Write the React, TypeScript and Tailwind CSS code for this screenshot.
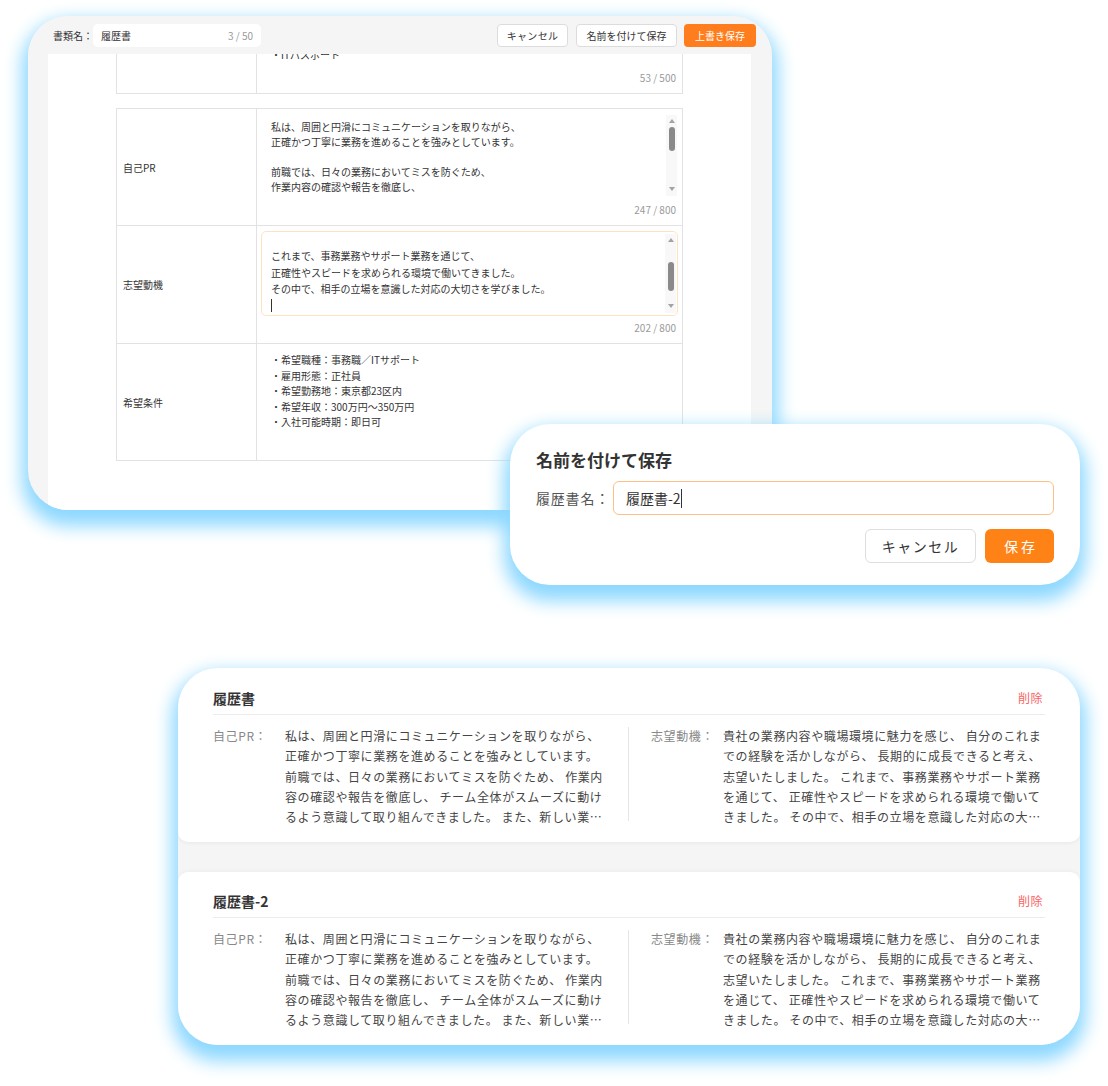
import React from "react";

const prText =
  "私は、周囲と円滑にコミュニケーションを取りながら、正確かつ丁寧に業務を進めることを強みとしています。 前職では、日々の業務においてミスを防ぐため、 作業内容の確認や報告を徹底し、 チーム全体がスムーズに動けるよう意識して取り組んできました。 また、新しい業務にも積極的に取り組み、周囲から信頼を得てきました。";

const motiveText =
  "貴社の業務内容や職場環境に魅力を感じ、 自分のこれまでの経験を活かしながら、 長期的に成長できると考え、志望いたしました。 これまで、事務業務やサポート業務を通じて、 正確性やスピードを求められる環境で働いてきました。 その中で、相手の立場を意識した対応の大切さを学びました。";

const Arrow = ({ down }: { down?: boolean }) => (
  <svg width="6" height="4" viewBox="0 0 6 4" className="shrink-0">
    {down ? <path d="M0 0h6L3 4z" fill="#a3a3a3" /> : <path d="M0 4h6L3 0z" fill="#a3a3a3" />}
  </svg>
);

const Scrollbar = ({ thumb }: { thumb: "pr" | "motive" }) => (
  <div className="absolute right-[1px] top-[2px] bottom-[2px] w-[11px] bg-[#f8f8f8] flex flex-col items-center pt-[4px] pb-[5px]">
    <Arrow />
    {thumb === "pr" ? (
      <div className="mt-[4px] w-[6px] h-[24px] rounded-full bg-[#8a8a8a]" />
    ) : (
      <div className="mt-[20px] w-[6px] h-[29px] rounded-full bg-[#8a8a8a]" />
    )}
    <div className="flex-1" />
    <Arrow down />
  </div>
);

function EditorCard() {
  return (
    <div className="absolute left-[28px] top-[16px] w-[744px] h-[494px] rounded-[40px] bg-[#f5f5f5] overflow-hidden flex flex-col shadow-[0_10px_18px_6px_#8dd8ff]">
      <header className="relative z-10 h-[38px] shrink-0 flex items-center pl-[25px] pr-[16px] bg-[#f5f5f5]">
        <span className="w-[40px] text-[10px] text-[#333]">書類名：</span>
        <div className="w-[168px] h-[23px] bg-white rounded-[5px] flex items-center justify-between pl-[8px] pr-[8px]">
          <span className="text-[10px] text-[#333]">履歴書</span>
          <span className="text-[10px] text-[#9a9a9a]">3 / 50</span>
        </div>
        <div className="ml-auto flex items-center">
          <button className="w-[71px] h-[23px] bg-white border border-[#dcdcdc] rounded-[4px] text-[10px] text-[#333] tracking-[0.3px]">
            キャンセル
          </button>
          <button className="ml-[8px] w-[101px] h-[23px] bg-white border border-[#dcdcdc] rounded-[4px] text-[10px] text-[#333]">
            名前を付けて保存
          </button>
          <button className="ml-[7px] w-[72px] h-[23px] bg-[#ff7d1c] rounded-[4px] text-[10px] text-white">
            上書き保存
          </button>
        </div>
      </header>

      <div className="flex-1 ml-[20px] mr-[21px] bg-white overflow-hidden pl-[68px]">
        <div className="w-[567px] -mt-[78px] text-[10px] text-[#333]">
          {/* previous section, scrolled mostly out of view */}
          <div className="border border-[#e2e2e2] grid grid-cols-[140px_1fr] h-[118px]">
            <div className="border-r border-[#e2e2e2]" />
            <div className="px-[4px] pt-[4px]">
              <div className="h-[85px] flex flex-col justify-end pl-[10px] pb-[4px] leading-[15px]">
                <p>・ITパスポート</p>
              </div>
              <p className="mt-[5px] h-[14px] leading-[14px] text-right pr-[2px] text-[#9a9a9a]">53 / 500</p>
            </div>
          </div>

          <div className="mt-[14px] border border-[#e2e2e2]">
            <div className="grid grid-cols-[140px_1fr] h-[116px]">
              <div className="border-r border-[#e2e2e2] flex items-center pl-[6px]">自己PR</div>
              <div className="px-[4px] pt-[4px]">
                <div className="relative h-[85px] pl-[10px] pt-[6px] leading-[15px]">
                  <p>私は、周囲と円滑にコミュニケーションを取りながら、</p>
                  <p>正確かつ丁寧に業務を進めることを強みとしています。</p>
                  <p className="h-[15px]" />
                  <p>前職では、日々の業務においてミスを防ぐため、</p>
                  <p>作業内容の確認や報告を徹底し、</p>
                  <Scrollbar thumb="pr" />
                </div>
                <p className="mt-[5px] h-[14px] leading-[14px] text-right pr-[2px] text-[#9a9a9a]">247 / 800</p>
              </div>
            </div>

            <div className="grid grid-cols-[140px_1fr] h-[118px] border-t border-[#e2e2e2]">
              <div className="border-r border-[#e2e2e2] flex items-center pl-[6px]">志望動機</div>
              <div className="px-[4px] pt-[5px]">
                <div className="relative h-[85px] border border-[#ffe2c4] rounded-[5px] pl-[9px] pt-[16px] leading-[16.5px] overflow-hidden">
                  <p>これまで、事務業務やサポート業務を通じて、</p>
                  <p>正確性やスピードを求められる環境で働いてきました。</p>
                  <p>その中で、相手の立場を意識した対応の大切さを学びました。</p>
                  <p className="h-[16.5px] flex items-center">
                    <span className="inline-block w-px h-[13px] bg-[#333]" />
                  </p>
                  <Scrollbar thumb="motive" />
                </div>
                <p className="mt-[5px] h-[14px] leading-[14px] text-right pr-[2px] text-[#9a9a9a]">202 / 800</p>
              </div>
            </div>

            <div className="grid grid-cols-[140px_1fr] h-[117px] border-t border-[#e2e2e2]">
              <div className="border-r border-[#e2e2e2] flex items-center pl-[6px]">希望条件</div>
              <div className="pl-[14px] pt-[8px] leading-[15.5px]">
                <p>・希望職種：事務職／ITサポート</p>
                <p>・雇用形態：正社員</p>
                <p>・希望勤務地：東京都23区内</p>
                <p>・希望年収：300万円〜350万円</p>
                <p>・入社可能時期：即日可</p>
              </div>
            </div>
          </div>
        </div>
      </div>
    </div>
  );
}

function SaveDialog() {
  return (
    <div className="absolute left-[510px] top-[424px] w-[570px] h-[161px] rounded-[40px] bg-white px-[26px] pt-[24px] shadow-[0_10px_18px_6px_#8dd8ff]">
      <h2 className="text-[17px] font-bold leading-[24px] text-[#333]">名前を付けて保存</h2>
      <div className="mt-[9px] flex items-center">
        <span className="w-[77px] shrink-0 text-[14px] text-[#555] tracking-[0.8px]">履歴書名：</span>
        <div className="flex-1 h-[34px] border-[1.5px] border-[#ffbf88] rounded-[6px] flex items-center pl-[12px] text-[14px] text-[#333]">
          履歴書-2
          <span className="inline-block w-px h-[19px] bg-[#333]" />
        </div>
      </div>
      <div className="mt-[14px] flex justify-end gap-[9px]">
        <button className="w-[111px] h-[34px] bg-white border border-[#dedede] rounded-[6px] text-[14px] text-[#333] tracking-[1.5px]">
          キャンセル
        </button>
        <button className="w-[69px] h-[34px] bg-[#ff8216] rounded-[6px] text-[14px] text-white tracking-[3px] pl-[3px]">
          保存
        </button>
      </div>
    </div>
  );
}

function ResumeItem({ title, rounded }: { title: string; rounded: "bottom" | "top" }) {
  return (
    <div
      className={
        rounded === "bottom"
          ? "h-[174px] shrink-0 bg-white rounded-b-[10px] px-[35px] pt-[20px] shadow-[0_1px_4px_rgba(0,0,0,0.06)]"
          : "h-[173px] shrink-0 bg-white rounded-t-[10px] px-[35px] pt-[19px] shadow-[0_-1px_4px_rgba(0,0,0,0.04)]"
      }
    >
      <div className="h-[20px] flex items-center justify-between pr-[2px]">
        <span className="text-[14px] font-bold leading-[20px] text-[#333]">{title}</span>
        <span className="text-[12px] text-[#f76464] tracking-[0.5px]">削除</span>
      </div>
      <div className="mt-[6px] border-t border-[#ececec]" />
      <div className="flex pt-[11px] text-[12px] leading-[20.3px] tracking-[0.6px]">
        <div className="w-[415px] shrink-0 flex">
          <span className="w-[72px] shrink-0 text-[#888]">自己PR：</span>
          <p className="w-[322px] text-[#454545] line-clamp-5">{prText}</p>
        </div>
        <div className="w-px h-[94px] mt-[1px] bg-[#e6e6e6] shrink-0" />
        <div className="flex-1 flex pl-[22px]">
          <span className="w-[72px] shrink-0 text-[#888]">志望動機：</span>
          <p className="flex-1 text-[#454545] line-clamp-5">{motiveText}</p>
        </div>
      </div>
    </div>
  );
}

function ListCard() {
  return (
    <div className="absolute left-[178px] top-[668px] w-[902px] h-[377px] rounded-[40px] bg-[#f5f5f5] overflow-hidden flex flex-col gap-[30px] shadow-[0_10px_18px_6px_#8dd8ff]">
      <ResumeItem title="履歴書" rounded="bottom" />
      <ResumeItem title="履歴書-2" rounded="top" />
    </div>
  );
}

export default function App() {
  return (
    <div className="relative w-[1108px] h-[1086px] bg-white overflow-hidden font-['Noto_Sans_CJK_JP','Noto_Sans',sans-serif] text-[#333]">
      <EditorCard />
      <SaveDialog />
      <ListCard />
    </div>
  );
}
